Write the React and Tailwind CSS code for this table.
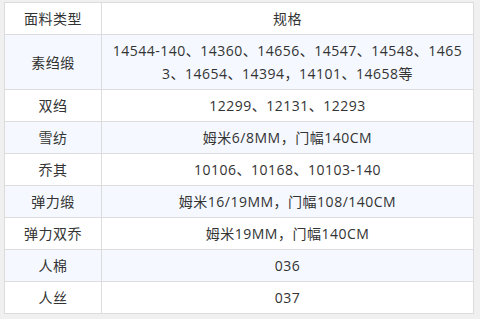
import React from 'react';

const rows = [
  { type: '素绉缎', spec: '14544-140、14360、14656、14547、14548、14653、14654、14394，14101、14658等' },
  { type: '双绉', spec: '12299、12131、12293' },
  { type: '雪纺', spec: '姆米6/8MM，门幅140CM' },
  { type: '乔其', spec: '10106、10168、10103-140' },
  { type: '弹力缎', spec: '姆米16/19MM，门幅108/140CM' },
  { type: '弹力双乔', spec: '姆米19MM，门幅140CM' },
  { type: '人棉', spec: '036' },
  { type: '人丝', spec: '037' },
];

export default function App() {
  return (
    <div
      className="w-[480px] h-[319px] bg-[#f0f0f0] pl-1 pt-[2px]"
      style={{ fontFamily: '"Open Sans", "Noto Sans CJK SC", sans-serif' }}
    >
      <table className="w-[470px] border-collapse bg-white text-[14px] leading-[23px] tracking-[0.5px] text-[#333] table-fixed">
        <colgroup>
          <col className="w-[97px]" />
          <col />
        </colgroup>
        <thead>
          <tr className="bg-white">
            <th className="border border-[#dcdcdc] py-1 font-normal text-center">面料类型</th>
            <th className="border border-[#dcdcdc] py-1 font-normal text-center">规格</th>
          </tr>
        </thead>
        <tbody>
          {rows.map((r, i) => (
            <tr key={r.type} className={i % 2 === 0 ? 'bg-[#f5f9ff]' : 'bg-white'}>
              <td className="border border-[#dcdcdc] py-1 text-center">{r.type}</td>
              <td className="border border-[#dcdcdc] py-1 px-[9px] text-center break-all">{r.spec}</td>
            </tr>
          ))}
        </tbody>
      </table>
    </div>
  );
}
